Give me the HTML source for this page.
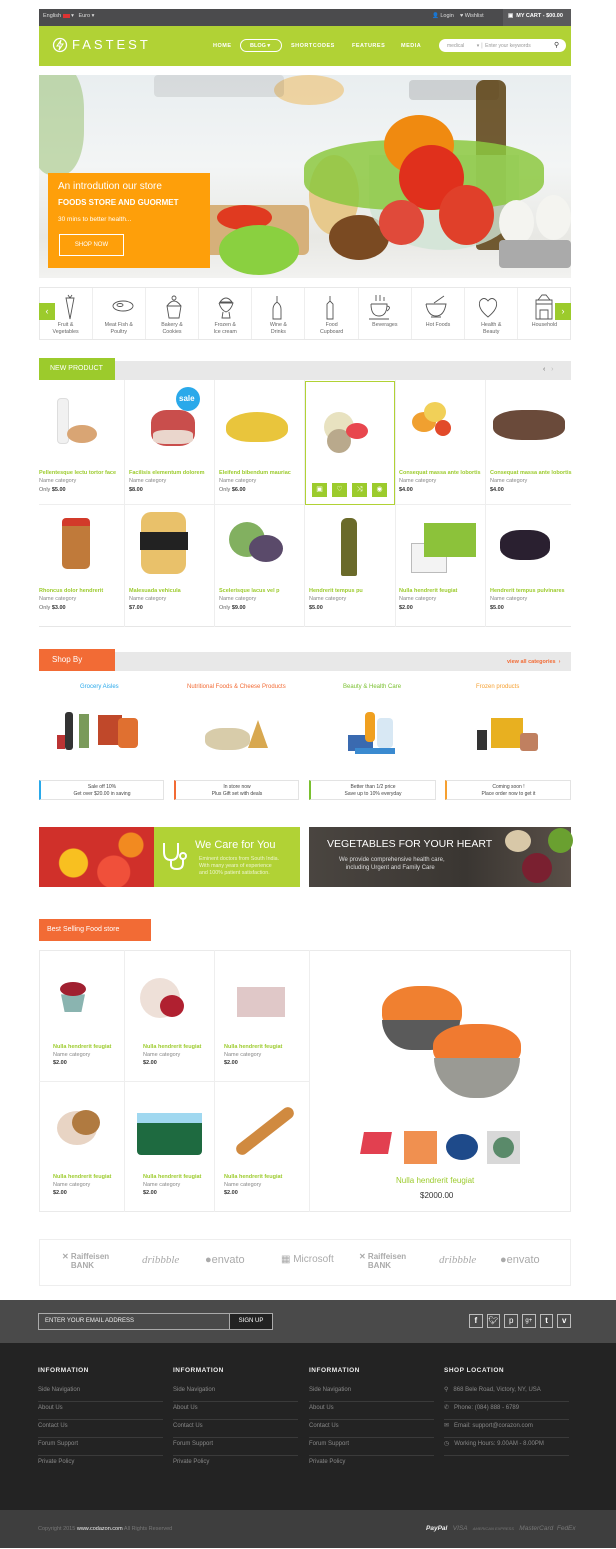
<!DOCTYPE html>
<html><head><meta charset="utf-8"><style>
*{margin:0;padding:0;box-sizing:border-box}
body{width:616px;height:1549px;background:#fff;font-family:"Liberation Sans",sans-serif;position:relative;overflow:hidden}
.a{position:absolute}
.t{position:absolute;white-space:nowrap}
.pn{color:#9ccb2c;font-size:5.5px;font-weight:bold}
.pc{color:#888;font-size:5.5px}
.pp{color:#333;font-size:5.5px;font-weight:bold}
.pp span{font-weight:normal;color:#666}
.fl{position:absolute;font-size:6px;color:#888;width:125px;border-bottom:1px solid #3a3a3a;height:18px;line-height:12px}
.fh{position:absolute;font-size:6.5px;color:#eee;font-weight:bold;letter-spacing:.5px}
.blob{position:absolute;border-radius:50%}
.hb{position:absolute;width:15px;height:14px;background:#9ccb2c;color:#fff;font-size:7px;text-align:center;line-height:14px}
</style></head><body>

<!-- top bar -->
<div class="a" style="left:39px;top:9px;width:532px;height:17px;background:#4b4b4d"></div>
<div class="t" style="left:43px;top:13px;font-size:5.5px;color:#ddd">English <span style="display:inline-block;width:7px;height:4px;background:#d33;vertical-align:middle"></span> ▾ &nbsp;&nbsp;Euro ▾</div>
<div class="t" style="left:432px;top:13px;font-size:5.5px;color:#ddd">👤 Login &nbsp;&nbsp;&nbsp;♥ Wishlist</div>
<div class="a" style="left:503px;top:9px;width:68px;height:17px;background:#5a5a5c"></div>
<div class="t" style="left:508px;top:13px;font-size:5.5px;color:#fff;font-weight:bold">▣&nbsp; MY CART - $00.00</div>

<!-- nav -->
<div class="a" style="left:39px;top:26px;width:532px;height:40px;background:#b1d235"></div>
<svg class="a" style="left:52px;top:37px" width="16" height="16" viewBox="0 0 16 16"><circle cx="8" cy="8" r="6.5" fill="none" stroke="#fff" stroke-width="1.3"/><path d="M9 3 L5 9 H8 L7 13 L11 7 H8 Z" fill="none" stroke="#fff" stroke-width="1"/></svg>
<div class="t" style="left:72px;top:37px;font-size:13px;color:#fff;letter-spacing:3px">FASTEST</div>
<div class="t" style="left:213px;top:43px;font-size:5.5px;color:#fff;font-weight:bold;letter-spacing:.5px">HOME</div>
<div class="a" style="left:240px;top:39px;width:42px;height:13px;border:1px solid #fff;border-radius:7px"></div>
<div class="t" style="left:250px;top:43px;font-size:5.5px;color:#fff;font-weight:bold">BLOG ▾</div>
<div class="t" style="left:291px;top:43px;font-size:5.5px;color:#fff;font-weight:bold;letter-spacing:.5px">SHORTCODES</div>
<div class="t" style="left:352px;top:43px;font-size:5.5px;color:#fff;font-weight:bold;letter-spacing:.5px">FEATURES</div>
<div class="t" style="left:401px;top:43px;font-size:5.5px;color:#fff;font-weight:bold;letter-spacing:.5px">MEDIA</div>
<div class="a" style="left:439px;top:39px;width:127px;height:13px;background:#fff;border-radius:7px"></div>
<div class="t" style="left:447px;top:43px;font-size:5px;color:#999">medical &nbsp;&nbsp;&nbsp;&nbsp;&nbsp;&nbsp;&nbsp;&nbsp;▾ │ Enter your keywords</div>
<div class="t" style="left:554px;top:41px;font-size:7px;color:#333">⚲</div>

<!-- hero -->
<div class="a" style="left:39px;top:75px;width:532px;height:203px;background:linear-gradient(180deg,#e9eef0 0%,#f3f5f5 45%,#e8e8e4 80%,#f2f2f0 100%);overflow:hidden">
  <div class="blob" style="left:-10px;top:-10px;width:55px;height:110px;background:#8ab85a;opacity:.45;border-radius:40%"></div>
  <div class="blob" style="left:235px;top:0px;width:70px;height:30px;background:#f0b040;opacity:.45"></div>
  <div class="blob" style="left:115px;top:0px;width:130px;height:22px;background:#333;opacity:.1;border-radius:4px"></div>
  <div class="blob" style="left:370px;top:5px;width:90px;height:20px;background:#222;opacity:.15;border-radius:4px"></div>
  <div class="a" style="left:437px;top:5px;width:30px;height:170px;background:#5a4010;border-radius:8px 8px 4px 4px;opacity:.85"></div>
  <div class="blob" style="left:150px;top:130px;width:120px;height:50px;background:#d6b07a;border-radius:6px"></div>
  <div class="blob" style="left:270px;top:80px;width:50px;height:80px;background:#e7c98c"></div>
  <div class="blob" style="left:290px;top:140px;width:60px;height:45px;background:#7a4a22"></div>
  <div class="blob" style="left:330px;top:80px;width:150px;height:95px;background:#cfe3d4;opacity:.8;border-radius:0 0 50% 50%"></div>
  <div class="blob" style="left:265px;top:65px;width:240px;height:70px;background:#8cc840;opacity:.85;border-radius:40%"></div>
  <div class="blob" style="left:345px;top:40px;width:70px;height:60px;background:#f08a10"></div>
  <div class="blob" style="left:360px;top:70px;width:65px;height:65px;background:#e0301c"></div>
  <div class="blob" style="left:400px;top:110px;width:55px;height:60px;background:#e0402a"></div>
  <div class="blob" style="left:340px;top:125px;width:45px;height:45px;background:#e04a3a"></div>
  <div class="blob" style="left:178px;top:130px;width:55px;height:25px;background:#e03a20"></div>
  <div class="blob" style="left:180px;top:150px;width:80px;height:50px;background:#8ad040"></div>
  <div class="blob" style="left:460px;top:125px;width:35px;height:45px;background:#f4f4f0"></div>
  <div class="blob" style="left:497px;top:120px;width:35px;height:45px;background:#f4f4f0"></div>
  <div class="a" style="left:460px;top:165px;width:72px;height:28px;background:#aaa;border-radius:4px"></div>
  <div class="a" style="left:9px;top:98px;width:162px;height:95px;background:#fe9f0a"></div>
  <div class="t" style="left:19px;top:106px;font-size:10px;color:#fff">An introdution our store</div>
  <div class="t" style="left:19px;top:123px;font-size:8px;color:#fff;font-weight:bold">FOODS STORE AND GUORMET</div>
  <div class="t" style="left:19px;top:141px;font-size:6.5px;color:#fff">30 mins to better health...</div>
  <div class="a" style="left:20px;top:159px;width:65px;height:22px;border:1px solid #fff;color:#fff;font-size:6px;text-align:center;line-height:20px">SHOP NOW</div>
</div>

<!-- categories -->
<div class="a" style="left:39px;top:287px;width:532px;height:53px;border:1px solid #e8e8e8;display:flex">
  <div style="flex:1;border-right:1px solid #eee"></div><div style="flex:1;border-right:1px solid #eee"></div><div style="flex:1;border-right:1px solid #eee"></div><div style="flex:1;border-right:1px solid #eee"></div><div style="flex:1;border-right:1px solid #eee"></div><div style="flex:1;border-right:1px solid #eee"></div><div style="flex:1;border-right:1px solid #eee"></div><div style="flex:1;border-right:1px solid #eee"></div><div style="flex:1;border-right:1px solid #eee"></div><div style="flex:1"></div>
</div>
<svg class="a" style="left:39px;top:292px" width="532" height="30" viewBox="0 0 532 30" fill="none" stroke="#555" stroke-width=".9">
  <path d="M27 6 L35 6 L31 27 Z M29 3 L31 6 L33 3"/>
  <ellipse cx="84" cy="14" rx="10" ry="5"/><ellipse cx="81" cy="13" rx="3" ry="1.5"/>
  <path d="M128 14 H142 L140 26 H130 Z M128 14 Q135 4 142 14"/><circle cx="135" cy="6" r="2"/>
  <path d="M181 10 Q187 2 193 10 Z M180 11 H194 Q192 18 187 20 Q182 18 180 11 M184 20 L183 26 H191 L190 20"/>
  <path d="M238 4 V10 Q234 13 234 17 V27 H242 V17 Q242 13 238 10"/>
  <path d="M291 4 V9 L288 12 V27 H294 V12 L291 9"/>
  <path d="M332 12 H348 Q348 24 340 24 Q332 24 332 12 M348 14 Q353 15 348 19 M330 27 H350 M337 3 V9 M341 3 V9 M345 5 V9"/>
  <path d="M387 12 H407 Q405 24 397 24 Q389 24 387 12 M392 25 H402 M395 11 L405 4"/>
  <path d="M449 25 Q438 16 441 9 Q445 4 449 9 Q453 4 457 9 Q460 16 449 25Z"/>
  <path d="M497 8 H513 V27 H497 Z M497 12 H513 M501 18 H509 V27 H501 Z M499 8 L503 3 H507 L511 8"/>
</svg>
<div class="a" style="left:39px;top:303px;width:16px;height:17px;background:#9ccb2c;color:#fff;font-size:9px;text-align:center;line-height:17px">‹</div>
<div class="a" style="left:555px;top:303px;width:16px;height:17px;background:#9ccb2c;color:#fff;font-size:9px;text-align:center;line-height:17px">›</div>
<div class="a" style="left:39px;top:322px;width:532px;display:flex;font-size:5.3px;color:#666;text-align:center;line-height:6.5px">
  <div style="flex:1">Fruit &amp;<br>Vegetables</div><div style="flex:1">Meat Fish &amp;<br>Poultry</div><div style="flex:1">Bakery &amp;<br>Cookies</div><div style="flex:1">Frozen &amp;<br>Ice cream</div><div style="flex:1">Wine &amp;<br>Drinks</div><div style="flex:1">Food<br>Cupboard</div><div style="flex:1">Beverages</div><div style="flex:1">Hot Foods</div><div style="flex:1">Health &amp;<br>Beauty</div><div style="flex:1">Household</div>
</div>

<!-- new product header -->
<div class="a" style="left:39px;top:361px;width:532px;height:19px;background:#e8e8e8"></div>
<div class="a" style="left:39px;top:358px;width:76px;height:22px;background:#9ccb2c;color:#fff;font-size:7px;line-height:22px;padding-left:11px">NEW PRODUCT</div>
<div class="t" style="left:543px;top:366px;font-size:7px;color:#666">‹ &nbsp; <span style="color:#bbb">›</span></div>

<!-- product grid -->
<div class="a" style="left:39px;top:380px;width:532px;height:247px;border-bottom:1px solid #e6e6e6"></div>
<div class="a" style="left:39px;top:504px;width:532px;height:1px;background:#eee"></div>
<div class="a" style="left:124px;top:380px;width:1px;height:247px;background:#eee"></div>
<div class="a" style="left:214px;top:380px;width:1px;height:247px;background:#eee"></div>
<div class="a" style="left:304px;top:380px;width:1px;height:247px;background:#eee"></div>
<div class="a" style="left:395px;top:380px;width:1px;height:247px;background:#eee"></div>
<div class="a" style="left:485px;top:380px;width:1px;height:247px;background:#eee"></div>
<div class="a" style="left:305px;top:381px;width:90px;height:124px;border:1px solid #b1d235"></div>

<div class="a" style="left:57px;top:398px;width:12px;height:46px;background:#f1f1f1;border:1px solid #ddd;border-radius:4px"></div>
<div class="blob" style="left:67px;top:425px;width:30px;height:18px;background:#d9a574"></div>
<div class="blob" style="left:151px;top:410px;width:44px;height:36px;background:#c94e4c;border-radius:35%"></div>
<div class="blob" style="left:153px;top:430px;width:40px;height:14px;background:#ead6cc;border-radius:30%"></div>
<div class="blob" style="left:176px;top:387px;width:24px;height:24px;background:#2aa9ea"></div>
<div class="t" style="left:179px;top:394px;font-size:8px;color:#fff;font-weight:bold">sale</div>
<div class="blob" style="left:226px;top:412px;width:62px;height:30px;background:#e9c53c;border-radius:50% 50% 40% 40%"></div>
<div class="blob" style="left:324px;top:412px;width:30px;height:30px;background:#e8e2c0"></div>
<div class="blob" style="left:327px;top:429px;width:24px;height:24px;background:#b9a98c"></div>
<div class="blob" style="left:346px;top:423px;width:22px;height:16px;background:#e8474e"></div>
<div class="blob" style="left:412px;top:412px;width:24px;height:20px;background:#f0a030"></div>
<div class="blob" style="left:424px;top:402px;width:22px;height:20px;background:#f1d058"></div>
<div class="blob" style="left:435px;top:420px;width:16px;height:16px;background:#e24a2a"></div>
<div class="blob" style="left:493px;top:410px;width:72px;height:30px;background:#6a4a3a;border-radius:40%"></div>

<div class="hb" style="left:312px;top:483px">▣</div>
<div class="hb" style="left:332px;top:483px">♡</div>
<div class="hb" style="left:352px;top:483px">⤨</div>
<div class="hb" style="left:372px;top:483px">◉</div>

<div class="t pn" style="left:39px;top:470px">Pellentesque lectu tortor face</div><div class="t pc" style="left:39px;top:478px">Name category</div><div class="t pp" style="left:39px;top:487px"><span>Only</span> $5.00</div>
<div class="t pn" style="left:129px;top:470px">Facilisis elementum dolorem</div><div class="t pc" style="left:129px;top:478px">Name category</div><div class="t pp" style="left:129px;top:487px">$8.00</div>
<div class="t pn" style="left:219px;top:470px">Eleifend bibendum mauriac</div><div class="t pc" style="left:219px;top:478px">Name category</div><div class="t pp" style="left:219px;top:487px"><span>Only</span> $6.00</div>
<div class="t pn" style="left:399px;top:470px">Consequat massa ante lobortis</div><div class="t pc" style="left:399px;top:478px">Name category</div><div class="t pp" style="left:399px;top:487px">$4.00</div>
<div class="t pn" style="left:490px;top:470px">Consequat massa ante lobortis</div><div class="t pc" style="left:490px;top:478px">Name category</div><div class="t pp" style="left:490px;top:487px">$4.00</div>

<div class="a" style="left:62px;top:519px;width:28px;height:50px;background:#c07a3a;border-radius:5px"></div>
<div class="a" style="left:62px;top:518px;width:28px;height:8px;background:#d23a2a;border-radius:4px 4px 0 0"></div>
<div class="a" style="left:141px;top:512px;width:45px;height:62px;background:#e9c16a;border-radius:10px"></div>
<div class="a" style="left:140px;top:532px;width:48px;height:18px;background:#222"></div>
<div class="blob" style="left:229px;top:522px;width:36px;height:35px;background:#82b060"></div>
<div class="blob" style="left:249px;top:535px;width:34px;height:27px;background:#5a4a6a"></div>
<div class="a" style="left:341px;top:518px;width:16px;height:58px;background:#6a6a2a;border-radius:6px 6px 2px 2px"></div>
<div class="a" style="left:411px;top:543px;width:36px;height:30px;background:#f3f3f3;border:1px solid #bbb"></div>
<div class="a" style="left:424px;top:523px;width:52px;height:34px;background:#8cc23a"></div>
<div class="blob" style="left:500px;top:530px;width:50px;height:30px;background:#2a2030;border-radius:40%"></div>

<div class="t pn" style="left:39px;top:588px">Rhoncus dolor hendrerit</div><div class="t pc" style="left:39px;top:596px">Name category</div><div class="t pp" style="left:39px;top:605px"><span>Only</span> $3.00</div>
<div class="t pn" style="left:129px;top:588px">Malesuada vehicula</div><div class="t pc" style="left:129px;top:596px">Name category</div><div class="t pp" style="left:129px;top:605px">$7.00</div>
<div class="t pn" style="left:219px;top:588px">Scelerisque lacus vel p</div><div class="t pc" style="left:219px;top:596px">Name category</div><div class="t pp" style="left:219px;top:605px"><span>Only</span> $9.00</div>
<div class="t pn" style="left:309px;top:588px">Hendrerit tempus pu</div><div class="t pc" style="left:309px;top:596px">Name category</div><div class="t pp" style="left:309px;top:605px">$5.00</div>
<div class="t pn" style="left:399px;top:588px">Nulla hendrerit feugiat</div><div class="t pc" style="left:399px;top:596px">Name category</div><div class="t pp" style="left:399px;top:605px">$2.00</div>
<div class="t pn" style="left:490px;top:588px">Hendrerit tempus pulvinares</div><div class="t pc" style="left:490px;top:596px">Name category</div><div class="t pp" style="left:490px;top:605px">$5.00</div>

<!-- shop by -->
<div class="a" style="left:39px;top:652px;width:532px;height:19px;background:#e8e8e8"></div>
<div class="a" style="left:39px;top:649px;width:76px;height:22px;background:#f26b35;color:#fff;font-size:8px;line-height:22px;padding-left:13px">Shop By</div>
<div class="t" style="left:507px;top:659px;font-size:5.5px;color:#f26b35;font-weight:bold">view all categories &nbsp;›</div>
<div class="t" style="left:80px;top:684px;font-size:6px;color:#2aa9ea">Grocery Aisles</div>
<div class="t" style="left:187px;top:684px;font-size:6px;color:#f26b35">Nutritional Foods &amp; Cheese Products</div>
<div class="t" style="left:343px;top:684px;font-size:6px;color:#7ac030">Beauty &amp; Health Care</div>
<div class="t" style="left:476px;top:684px;font-size:6px;color:#f6a030">Frozen products</div>
<div class="a" style="left:65px;top:712px;width:8px;height:38px;background:#333;border-radius:3px"></div>
<div class="a" style="left:79px;top:714px;width:10px;height:34px;background:#7a9a5a"></div>
<div class="a" style="left:98px;top:715px;width:24px;height:30px;background:#c0482a"></div>
<div class="a" style="left:118px;top:718px;width:20px;height:30px;background:#e07030;border-radius:4px"></div>
<div class="a" style="left:57px;top:735px;width:8px;height:14px;background:#b33"></div>
<div class="blob" style="left:205px;top:728px;width:45px;height:22px;background:#d8ccaa;border-radius:40%"></div>
<div class="a" style="left:248px;top:720px;width:20px;height:28px;background:#d8a850;clip-path:polygon(50% 0,100% 100%,0 100%)"></div>
<div class="a" style="left:348px;top:735px;width:25px;height:16px;background:#3a6ab0"></div>
<div class="a" style="left:365px;top:712px;width:10px;height:30px;background:#f0a020;border-radius:4px"></div>
<div class="a" style="left:377px;top:718px;width:16px;height:30px;background:#d8e8f4;border-radius:4px"></div>
<div class="a" style="left:355px;top:748px;width:40px;height:6px;background:#3a8ad0"></div>
<div class="a" style="left:477px;top:730px;width:10px;height:20px;background:#333"></div>
<div class="a" style="left:491px;top:718px;width:32px;height:30px;background:#e8b020"></div>
<div class="a" style="left:520px;top:733px;width:18px;height:18px;background:#c08060;border-radius:3px"></div>
<div class="a" style="left:39px;top:780px;width:125px;height:20px;border:1px solid #e3e3e3;border-left:2px solid #2aa9ea;font-size:5px;color:#444;text-align:center;line-height:7px;padding-top:3px">Sale off 10%<br>Get over $20.00 in saving</div>
<div class="a" style="left:174px;top:780px;width:125px;height:20px;border:1px solid #e3e3e3;border-left:2px solid #f26b35;font-size:5px;color:#444;text-align:center;line-height:7px;padding-top:3px">In store now<br>Plus Gift set with deals</div>
<div class="a" style="left:309px;top:780px;width:127px;height:20px;border:1px solid #e3e3e3;border-left:2px solid #7ac030;font-size:5px;color:#444;text-align:center;line-height:7px;padding-top:3px">Better than 1/2 price<br>Save up to 10% everyday</div>
<div class="a" style="left:445px;top:780px;width:126px;height:20px;border:1px solid #e3e3e3;border-left:2px solid #f6a030;font-size:5px;color:#444;text-align:center;line-height:7px;padding-top:3px">Coming soon !<br>Place order now to get it</div>

<!-- banners -->
<div class="a" style="left:39px;top:827px;width:115px;height:60px;background:radial-gradient(circle at 30% 60%,#f8c020 0 14px,transparent 15px),radial-gradient(circle at 65% 75%,#f0503a 0 16px,transparent 17px),radial-gradient(circle at 80% 30%,#f28a20 0 12px,transparent 13px),#d0302a;overflow:hidden"></div>
<div class="a" style="left:154px;top:827px;width:146px;height:60px;background:#b1d235"></div>
<svg class="a" style="left:160px;top:840px" width="30" height="32" viewBox="0 0 30 32" fill="none" stroke="#fff" stroke-width="2"><path d="M4 3 V12 Q4 20 11 20 Q18 20 18 12 V3 M11 20 V25 Q11 29 17 29 Q23 29 23 23 V19"/><circle cx="23" cy="16" r="3"/></svg>
<div class="t" style="left:195px;top:839px;font-size:11px;color:#fff">We Care for You</div>
<div class="t" style="left:199px;top:856px;font-size:5.3px;color:#eef5d0;line-height:7px">Eminent doctors from South India.<br>With many years of experience<br>and 100% patient satisfaction.</div>
<div class="a" style="left:309px;top:827px;width:262px;height:60px;background:linear-gradient(90deg,#4a4540,#3a3632 60%,#5a5048)"></div>
<div class="blob" style="left:505px;top:830px;width:26px;height:22px;background:#d8c8a8"></div>
<div class="blob" style="left:548px;top:828px;width:25px;height:25px;background:#6aa030"></div>
<div class="blob" style="left:522px;top:853px;width:30px;height:30px;background:#7a2030"></div>
<div class="t" style="left:327px;top:838px;font-size:10.5px;color:#fff">VEGETABLES FOR YOUR HEART</div>
<div class="t" style="left:339px;top:856px;font-size:6px;color:#ddd;line-height:8px">We provide comprehensive health care,<br>&nbsp;&nbsp;&nbsp;&nbsp;including Urgent and Family Care</div>

<!-- best selling -->
<div class="a" style="left:39px;top:919px;width:112px;height:22px;background:#f26b35;color:#fff;font-size:7px;line-height:22px;padding-left:8px">Best Selling Food store</div>
<div class="a" style="left:39px;top:950px;width:532px;height:262px;border:1px solid #eaeaea"></div>
<div class="a" style="left:124px;top:950px;width:1px;height:262px;background:#eee"></div>
<div class="a" style="left:214px;top:950px;width:1px;height:262px;background:#eee"></div>
<div class="a" style="left:309px;top:950px;width:1px;height:262px;background:#eee"></div>
<div class="a" style="left:39px;top:1081px;width:271px;height:1px;background:#eee"></div>
<div class="a" style="left:61px;top:990px;width:24px;height:22px;background:#8ab4b0;clip-path:polygon(0 20%,100% 20%,85% 100%,15% 100%)"></div>
<div class="blob" style="left:60px;top:982px;width:26px;height:14px;background:#a02030"></div>
<div class="blob" style="left:140px;top:978px;width:40px;height:40px;background:#eee0d8"></div>
<div class="blob" style="left:160px;top:995px;width:24px;height:22px;background:#b02030"></div>
<div class="a" style="left:237px;top:987px;width:48px;height:30px;background:#e0c8c8"></div>
<div class="blob" style="left:57px;top:1111px;width:40px;height:34px;background:#e8d4c4"></div>
<div class="blob" style="left:72px;top:1110px;width:28px;height:25px;background:#b07a40"></div>
<div class="a" style="left:137px;top:1115px;width:65px;height:40px;background:#1e6a40;border-radius:4px"></div>
<div class="a" style="left:137px;top:1113px;width:65px;height:10px;background:#a0d8f0"></div>
<div class="a" style="left:230px;top:1125px;width:70px;height:12px;background:#d08a40;border-radius:6px;transform:rotate(-38deg)"></div>

<div class="t pn" style="left:53px;top:1044px">Nulla hendrerit feugiat</div><div class="t pc" style="left:53px;top:1052px">Name category</div><div class="t pp" style="left:53px;top:1060px">$2.00</div>
<div class="t pn" style="left:143px;top:1044px">Nulla hendrerit feugiat</div><div class="t pc" style="left:143px;top:1052px">Name category</div><div class="t pp" style="left:143px;top:1060px">$2.00</div>
<div class="t pn" style="left:224px;top:1044px">Nulla hendrerit feugiat</div><div class="t pc" style="left:224px;top:1052px">Name category</div><div class="t pp" style="left:224px;top:1060px">$2.00</div>
<div class="t pn" style="left:53px;top:1174px">Nulla hendrerit feugiat</div><div class="t pc" style="left:53px;top:1182px">Name category</div><div class="t pp" style="left:53px;top:1190px">$2.00</div>
<div class="t pn" style="left:143px;top:1174px">Nulla hendrerit feugiat</div><div class="t pc" style="left:143px;top:1182px">Name category</div><div class="t pp" style="left:143px;top:1190px">$2.00</div>
<div class="t pn" style="left:224px;top:1174px">Nulla hendrerit feugiat</div><div class="t pc" style="left:224px;top:1182px">Name category</div><div class="t pp" style="left:224px;top:1190px">$2.00</div>

<div class="blob" style="left:382px;top:986px;width:80px;height:52px;background:#f08030;border-radius:45%"></div>
<div class="a" style="left:382px;top:1020px;width:78px;height:30px;background:#5a5a5a;border-radius:0 0 30px 30px"></div>
<div class="blob" style="left:433px;top:1024px;width:88px;height:48px;background:#f07a30;border-radius:45%"></div>
<div class="a" style="left:434px;top:1058px;width:86px;height:40px;background:#9a9a94;border-radius:0 0 40px 40px"></div>
<div class="a" style="left:362px;top:1132px;width:28px;height:22px;background:#e24050;transform:skewX(-10deg)"></div>
<div class="a" style="left:404px;top:1131px;width:33px;height:33px;background:#f09050"></div>
<div class="blob" style="left:446px;top:1134px;width:32px;height:26px;background:#1e4a8a"></div>
<div class="a" style="left:487px;top:1131px;width:33px;height:33px;background:#d8d8d8"></div>
<div class="blob" style="left:493px;top:1137px;width:21px;height:21px;background:#5a8a6a"></div>
<div class="t" style="left:396px;top:1176px;font-size:8px;color:#9ccb2c">Nulla hendrerit feugiat</div>
<div class="t" style="left:420px;top:1191px;font-size:8px;color:#333">$2000.00</div>

<!-- brands -->
<div class="a" style="left:39px;top:1239px;width:532px;height:47px;border:1px solid #eee"></div>
<div class="t" style="left:62px;top:1252px;font-size:8px;color:#aaa;font-weight:bold;line-height:9px">✕ Raiffeisen<br>&nbsp;&nbsp;&nbsp;&nbsp;BANK</div>
<div class="t" style="left:142px;top:1254px;font-size:11px;color:#aaa;font-style:italic;font-family:'Liberation Serif',serif">dribbble</div>
<div class="t" style="left:205px;top:1254px;font-size:11px;color:#aaa">●envato</div>
<div class="t" style="left:281px;top:1254px;font-size:10px;color:#aaa">▦ Microsoft</div>
<div class="t" style="left:359px;top:1252px;font-size:8px;color:#aaa;font-weight:bold;line-height:9px">✕ Raiffeisen<br>&nbsp;&nbsp;&nbsp;&nbsp;BANK</div>
<div class="t" style="left:439px;top:1254px;font-size:11px;color:#aaa;font-style:italic;font-family:'Liberation Serif',serif">dribbble</div>
<div class="t" style="left:500px;top:1254px;font-size:11px;color:#aaa">●envato</div>

<!-- footer -->
<div class="a" style="left:0;top:1300px;width:616px;height:43px;background:#4a4a4a"></div>
<div class="a" style="left:38px;top:1313px;width:235px;height:17px;border:1px solid #aaa"></div>
<div class="t" style="left:45px;top:1318px;font-size:6px;color:#eee">ENTER YOUR EMAIL ADDRESS</div>
<div class="a" style="left:229px;top:1313px;width:44px;height:17px;background:#222;border:1px solid #aaa;color:#fff;font-size:6px;text-align:center;line-height:15px">SIGN UP</div>
<div class="a" style="left:469px;top:1314px;width:102px;height:14px;display:flex;gap:4px">
<div style="width:14px;height:14px;border:1px solid #bbb;color:#fff;font-size:8px;text-align:center;line-height:12px;font-weight:bold">f</div>
<div style="width:14px;height:14px;border:1px solid #bbb;color:#fff;font-size:8px;text-align:center;line-height:12px">🐦︎</div>
<div style="width:14px;height:14px;border:1px solid #bbb;color:#fff;font-size:8px;text-align:center;line-height:12px">p</div>
<div style="width:14px;height:14px;border:1px solid #bbb;color:#fff;font-size:6px;text-align:center;line-height:12px">g+</div>
<div style="width:14px;height:14px;border:1px solid #bbb;color:#fff;font-size:8px;text-align:center;line-height:12px;font-weight:bold">t</div>
<div style="width:14px;height:14px;border:1px solid #bbb;color:#fff;font-size:8px;text-align:center;line-height:12px;font-weight:bold">v</div>
</div>
<div class="a" style="left:0;top:1343px;width:616px;height:167px;background:#232323"></div>
<div class="fh" style="left:38px;top:1367px">INFORMATION</div>
<div class="fh" style="left:173px;top:1367px">INFORMATION</div>
<div class="fh" style="left:309px;top:1367px">INFORMATION</div>
<div class="fh" style="left:444px;top:1367px">SHOP LOCATION</div>

<div class="fl" style="left:38px;top:1384px">Side Navigation</div><div class="fl" style="left:38px;top:1402px">About Us</div><div class="fl" style="left:38px;top:1420px">Contact Us</div><div class="fl" style="left:38px;top:1438px">Forum Support</div><div class="fl" style="left:38px;top:1456px;border:none">Private Policy</div>
<div class="fl" style="left:173px;top:1384px">Side Navigation</div><div class="fl" style="left:173px;top:1402px">About Us</div><div class="fl" style="left:173px;top:1420px">Contact Us</div><div class="fl" style="left:173px;top:1438px">Forum Support</div><div class="fl" style="left:173px;top:1456px;border:none">Private Policy</div>
<div class="fl" style="left:309px;top:1384px">Side Navigation</div><div class="fl" style="left:309px;top:1402px">About Us</div><div class="fl" style="left:309px;top:1420px">Contact Us</div><div class="fl" style="left:309px;top:1438px">Forum Support</div><div class="fl" style="left:309px;top:1456px;border:none">Private Policy</div>
<div class="fl" style="left:444px;top:1384px">⚲ &nbsp;&nbsp;868 Bele Road, Victory, NY, USA</div><div class="fl" style="left:444px;top:1402px">✆ &nbsp;&nbsp;Phone: (084) 888 - 6789</div><div class="fl" style="left:444px;top:1420px">✉ &nbsp;&nbsp;Email: support@corazon.com</div><div class="fl" style="left:444px;top:1438px">◷ &nbsp;&nbsp;Working Hours: 9.00AM - 8.00PM</div>

<div class="a" style="left:0;top:1510px;width:616px;height:38px;background:#3e3e3e"></div>
<div class="t" style="left:38px;top:1526px;font-size:5.5px;color:#777">Copyright 2015 <span style="color:#eee">www.codazon.com</span> All Rights Reserved</div>
<div class="t" style="left:426px;top:1525px;font-size:6.5px;color:#777;font-style:italic"><b style="color:#eee">PayPal</b> &nbsp;&nbsp;VISA &nbsp;&nbsp;<span style="font-size:4px">AMERICAN EXPRESS</span> &nbsp;&nbsp;MasterCard &nbsp;FedEx</div>
</body></html>
